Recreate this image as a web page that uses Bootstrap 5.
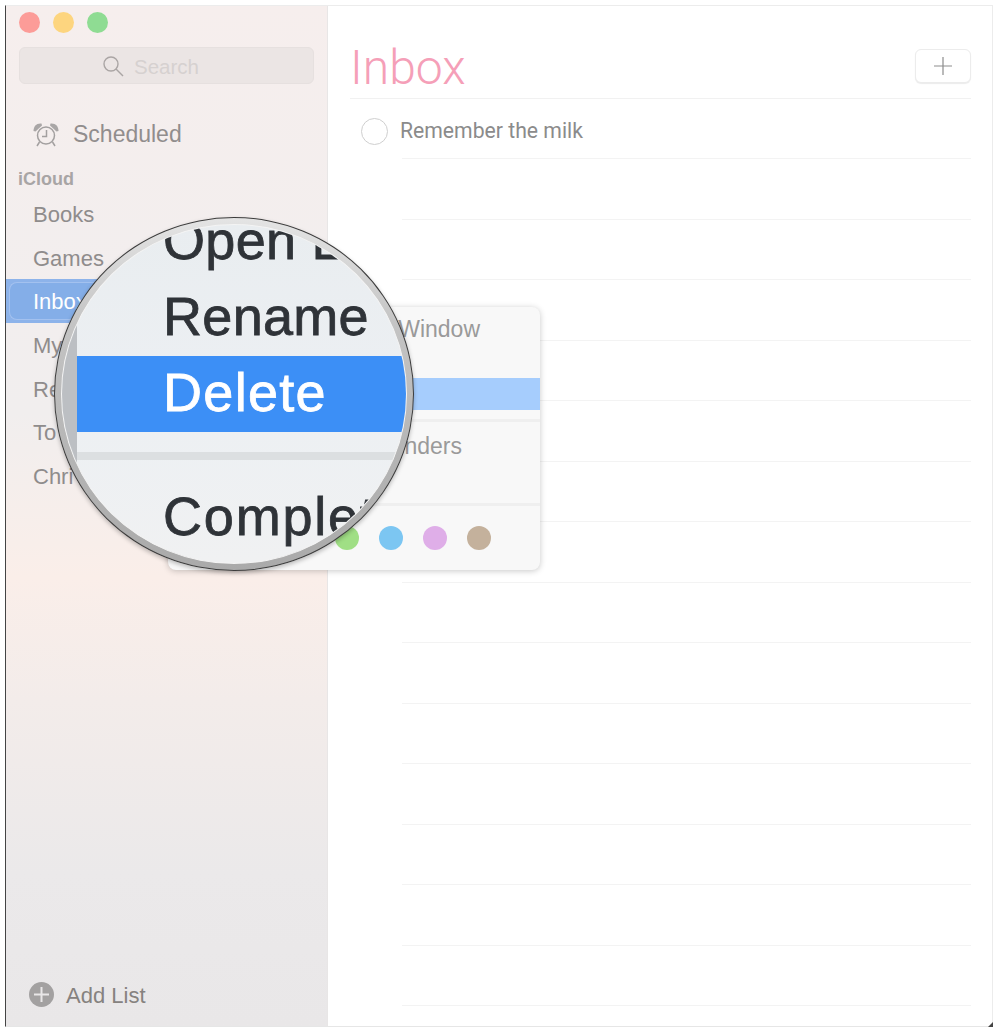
<!DOCTYPE html>
<html lang="en">
<head>
    <meta charset="UTF-8">
    <meta name="viewport" content="width=device-width, initial-scale=1.0">
    <title>Reminders - Delete list</title>
    <link href="https://cdn.jsdelivr.net/npm/bootstrap@5.3.0/dist/css/bootstrap.min.css" rel="stylesheet">
    <style>
        html, body { height: 100%; }
        body { background: #fff; font-family: "Liberation Sans", Arial, sans-serif; overflow: hidden; }
        .app-window {
            position: relative;
            width: 988px;
            height: 1022px;
            margin: 5px 0 0 5px;
            border-top: 1px solid #ececec;
            border-right: 1px solid #ececec;
            border-bottom: 1px solid #e6e6e6;
            border-left: 1px solid #444;
        }
        .app-window::after {
            content: "";
            position: absolute;
            right: -1px;
            bottom: -1px;
            width: 5px;
            height: 5px;
            background: #444;
            clip-path: polygon(100% 0, 100% 100%, 0 100%);
        }
        .side-pane {
            width: 322px;
            flex: none;
            background: linear-gradient(180deg, #f6eeed 0%, #f2eeee 30%, #f1eeee 40%, #faeee9 56%, #f3ecea 68%, #ebe9ea 85%, #e9e7e8 100%);
            border-right: 1px solid #e8e6e6;
        }
        .traffic { width: 21px; height: 21px; border-radius: 50%; }
        .tl-red { background: #fc9c98; }
        .tl-yellow { background: #fdd57f; }
        .tl-green { background: #8fdc93; }
        .traffic-row { gap: 13px; padding: 6px 0 0 13px; }
        .search-box {
            height: 37px;
            margin: 14px 13px 0 13px;
            padding-right: 32px;
            gap: 10px;
            background: #ebe5e4;
            border: 1px solid #e6e0df;
            border-radius: 6px;
            color: #d6d1d0;
            font-size: 20.5px;
        }
        .sched-row { margin: 36px 0 0 27px; gap: 14px; color: #918d8d; font-size: 23px; line-height: 28px; }
        .group-label { margin: 19.500px 0 0 12px; color: #a8a5a5; font-size: 18px; font-weight: 700; line-height: 22px; }
        .list-items { margin-top: 2.500px; }
        .list-row { position: relative; height: 43.6px; padding: 2px 0 0 27px; color: #8f8c8c; font-size: 22px; }
        .list-row.is-active { background: #8db3ea; color: #fff; }
        .list-row.is-active::before {
            content: "";
            position: absolute;
            inset: 3px 0 3px 3px;
            background: #84aee8;
            border: 1px solid #a3c1ef;
            border-right: 0;
            border-radius: 8px 0 0 8px;
        }
        .list-row.is-active span { position: relative; }
        .add-row { left: 23px; bottom: 16px; gap: 12px; color: #86827f; font-size: 22px; line-height: 28px; }
        .main-pane { min-width: 0; background: #fff; padding: 0 21px 0 22px; }
        .main-head { height: 93px; border-bottom: 1px solid #f1f1f1; }
        .main-title { color: #f59fb8; font-family: Roboto, "Liberation Sans", sans-serif; font-weight: 300; font-size: 48px; line-height: 1; margin: 0 0 6px; }
        .add-btn { width: 56px; height: 34px; margin-bottom: 15px; border: 1px solid #ececec; border-radius: 6px; background: #fff; box-shadow: 0 1px 1px #ececec; }
        .task-row { height: 59px; gap: 12px; padding: 5px 0 0 11px; color: #8b8b8b; font-family: Roboto, "Liberation Sans", sans-serif; font-size: 21.2px; }
        .task-check { width: 27px; height: 27px; flex: none; border: 1px solid #cfcfcf; border-radius: 50%; }
        .task-line { height: 60.5px; margin-left: 52px; border-top: 1px solid #f3f3f3; }
        .ctx-menu {
            position: absolute;
            left: 162px;
            top: 301px;
            width: 372px;
            height: 263px;
            overflow: hidden;
            background: #f8f8f8;
            border-radius: 8px;
            box-shadow: 0 1px 6px rgba(0, 0, 0, .22);
            color: #9a9a9a;
            font-size: 23px;
        }
        .ctx-row { position: absolute; right: 60px; line-height: 28px; white-space: nowrap; }
        .ctx-open { top: 8px; }
        .ctx-hl { position: absolute; left: 0; right: 0; top: 71px; height: 32px; background: #a6cdfd; }
        .ctx-rem { top: 125px; right: 78px; }
        .ctx-sep { position: absolute; left: 0; right: 0; height: 3px; background: #efefef; }
        .ctx-dots { position: absolute; left: 167px; top: 219px; gap: 20px; }
        .ctx-dot { width: 24px; height: 24px; border-radius: 50%; }
        .lens {
            position: absolute;
            left: 48px;
            top: 211px;
            width: 360px;
            height: 354px;
            border-radius: 50%;
            background: linear-gradient(180deg, #e4e4e4 0%, #c4c4c4 30%, #b4b4b4 70%, #aaa 100%);
            border: 1px solid #3c3c3c;
            box-shadow: 0 2px 4px rgba(0, 0, 0, .25);
        }
        .lens-glass {
            position: absolute;
            inset: 6px;
            border-radius: 50%;
            overflow: hidden;
            background: linear-gradient(180deg, #e9edf0 0%, #edf0f3 60%, #f0f1f2 100%);
            border: 1px solid #f4f4f4;
        }
        .lens-strip { position: absolute; left: 0; top: 0; bottom: 0; width: 15px; background: #bcbfc3; }
        .lens-menu { position: absolute; left: 15px; right: 0; top: 0; color: #2f3338; font-size: 54px; -webkit-text-stroke: .8px currentColor; }
        .lens-text { height: 76px; line-height: 73px; padding-left: 86px; white-space: nowrap; letter-spacing: .3px; }
        .lens-open { margin-top: -21.5px; }
        .lens-delete { background: #3c8ff6; color: #fff; letter-spacing: 1.3px; }
        .lens-sep { height: 8px; margin-top: 20px; background: #dcdfe1; }
        .lens-complete { margin-top: 20.5px; letter-spacing: 1.8px; }
    </style>
</head>
<body>
    <div class="app-window d-flex">
        <!-- sidebar -->
        <div class="side-pane position-relative">
            <div class="traffic-row d-flex">
                <div class="traffic tl-red"></div>
                <div class="traffic tl-yellow"></div>
                <div class="traffic tl-green"></div>
            </div>
            <div class="search-box d-flex align-items-center justify-content-center">
                <svg width="22" height="22" viewBox="0 0 22 22" fill="none" stroke="#aaa5a4" stroke-width="1.4"><circle cx="9" cy="9" r="7"/><path d="M14 14l7 7"/></svg>
                <span class="pt-1">Search</span>
            </div>
            <div class="sched-row d-flex align-items-center">
                <svg width="26" height="25" viewBox="0 0 26 25" fill="none" stroke="#a3a0a0" stroke-width="1.5"><circle cx="13" cy="13.5" r="8.5"/><path d="M13.5 8v6.5H9"/><path d="M6.5 20l-2.5 4M19.500 20l2.500 4"/><path d="M0.500 9C0.500 4 3.500 1 8.500 1.500L9 3.500 2.500 9.500z" fill="#a9a6a6" stroke="none"/><path d="M25.500 9C25.500 4 22.500 1 17.500 1.500L17 3.500 23.500 9.500z" fill="#a9a6a6" stroke="none"/></svg>
                <span>Scheduled</span>
            </div>
            <div class="group-label">iCloud</div>
            <div class="list-items">
                <div class="list-row d-flex align-items-center"><span>Books</span></div>
                <div class="list-row d-flex align-items-center"><span>Games</span></div>
                <div class="list-row d-flex align-items-center is-active"><span>Inbox</span></div>
                <div class="list-row d-flex align-items-center"><span>My</span></div>
                <div class="list-row d-flex align-items-center"><span>Re</span></div>
                <div class="list-row d-flex align-items-center"><span>To</span></div>
                <div class="list-row d-flex align-items-center"><span>Chri</span></div>
            </div>
            <div class="add-row position-absolute d-flex align-items-center">
                <svg width="25" height="25" viewBox="0 0 25 25"><circle cx="12.5" cy="12.5" r="12.5" fill="#a3a1a1"/><path d="M12.5 5v15M5 12.5h15" stroke="#e9e7e8" stroke-width="2"/></svg>
                <span class="pt-1">Add List</span>
            </div>
        </div>

        <!-- main list -->
        <div class="main-pane flex-grow-1">
            <div class="main-head d-flex justify-content-between align-items-end">
                <h1 class="main-title">Inbox</h1>
                <div class="add-btn d-flex align-items-center justify-content-center">
                    <svg width="20" height="20" viewBox="0 0 20 20"><path d="M10 1v18M1 10h18" stroke="#8d8d8d" stroke-width="1.2"/></svg>
                </div>
            </div>
            <div class="task-row d-flex align-items-center">
                <div class="task-check"></div>
                <span>Remember the milk</span>
            </div>
            <div class="task-line"></div>
            <div class="task-line"></div>
            <div class="task-line"></div>
            <div class="task-line"></div>
            <div class="task-line"></div>
            <div class="task-line"></div>
            <div class="task-line"></div>
            <div class="task-line"></div>
            <div class="task-line"></div>
            <div class="task-line"></div>
            <div class="task-line"></div>
            <div class="task-line"></div>
            <div class="task-line"></div>
            <div class="task-line"></div>
            <div class="task-line"></div>
        </div>

        <!-- context menu under the magnifier -->
        <div class="ctx-menu">
            <div class="ctx-row ctx-open">Window</div>
            <div class="ctx-hl"></div>
            <div class="ctx-sep" style="top:112px"></div>
            <div class="ctx-row ctx-rem">Reminders</div>
            <div class="ctx-sep" style="top:196px"></div>
            <div class="ctx-dots d-flex">
                <div class="ctx-dot" style="background:#a0df85"></div>
                <div class="ctx-dot" style="background:#7cc6f2"></div>
                <div class="ctx-dot" style="background:#dfaee8"></div>
                <div class="ctx-dot" style="background:#c4b19c"></div>
            </div>
        </div>

        <!-- magnifier -->
        <div class="lens">
            <div class="lens-glass">
                <div class="lens-strip"></div>
                <div class="lens-menu">
                    <div class="lens-text lens-open">Open List</div>
                    <div class="lens-text">Rename</div>
                    <div class="lens-text lens-delete">Delete</div>
                    <div class="lens-sep"></div>
                    <div class="lens-text lens-complete">Completed</div>
                </div>
            </div>
        </div>
    </div>
    <script src="https://cdn.jsdelivr.net/npm/bootstrap@5.3.0/dist/js/bootstrap.bundle.min.js"></script>
</body>
</html>
